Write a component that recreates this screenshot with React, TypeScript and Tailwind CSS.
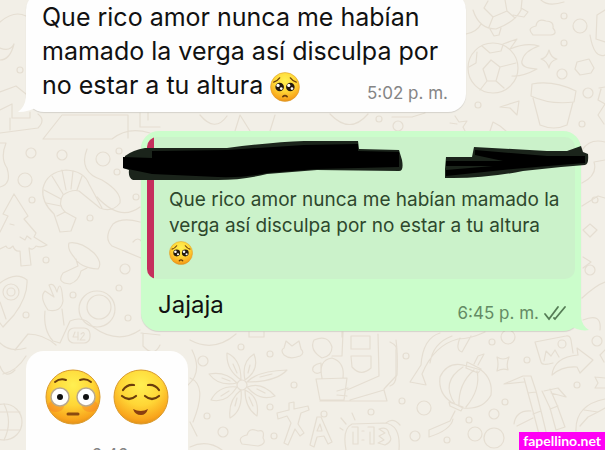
import { ReactNode, useId } from "react";

function Face({ className, label, children }: { className: string; label: string; children: ReactNode }) {
  const id = useId();
  return (
    <svg viewBox="0 0 56 56" role="img" aria-label={label} className={className}>
      <defs>
        <radialGradient id={id} cx="50%" cy="28%" r="75%">
          <stop offset="0" stopColor="#fff052" />
          <stop offset="0.5" stopColor="#ffd636" />
          <stop offset="0.85" stopColor="#f9a51c" />
          <stop offset="1" stopColor="#dd8a18" />
        </radialGradient>
      </defs>
      <circle cx="28" cy="28" r="27" fill={`url(#${id})`} stroke="#d99a2b" strokeWidth="1" />
      {children}
    </svg>
  );
}

function PleadingFace({ className }: { className: string }) {
  return (
    <Face className={className} label="pleading face">
      <g fill="none" stroke="#6b3d0c" strokeWidth="2.5" strokeLinecap="round">
        <path d="M7 19C11 18 15 15 18 11" />
        <path d="M49 19C45 18 41 15 38 11" />
        <path d="M24 46Q28 42 32 46" strokeWidth="3" />
      </g>
      <g fill="#24190f">
        <circle cx="18" cy="28" r="8" />
        <circle cx="38" cy="28" r="8" />
      </g>
      <g fill="#fff">
        <circle cx="15" cy="25" r="3" />
        <circle cx="35" cy="25" r="3" />
        <circle cx="21" cy="31" r="2.5" />
        <circle cx="41" cy="31" r="2.5" />
      </g>
    </Face>
  );
}

function FlushedFace({ className }: { className: string }) {
  return (
    <Face className={className} label="flushed face">
      <ellipse cx="11" cy="37" rx="8" ry="6" fill="#f4672a" opacity="0.3" />
      <ellipse cx="45" cy="37" rx="8" ry="6" fill="#f4672a" opacity="0.3" />
      <g fill="none" stroke="#6b3d0c" strokeWidth="2" strokeLinecap="round">
        <path d="M10 13Q15 9 21 11" />
        <path d="M35 11Q41 9 46 13" />
      </g>
      <g fill="#fff" stroke="#b9a98e" strokeWidth="1.5">
        <circle cx="15" cy="28" r="9" />
        <circle cx="41" cy="28" r="9" />
      </g>
      <circle cx="15" cy="28" r="3" fill="#111" />
      <circle cx="41" cy="28" r="3" fill="#111" />
      <path d="M23 45H33" stroke="#8a4a10" strokeWidth="3" strokeLinecap="round" />
    </Face>
  );
}

function RelievedFace({ className }: { className: string }) {
  return (
    <Face className={className} label="relieved face">
      <g fill="none" stroke="#6b3d0c" strokeWidth="2.2" strokeLinecap="round">
        <path d="M10 21Q14 15 21 16" />
        <path d="M35 16Q42 15 46 21" />
        <path d="M9 27Q16 33 23 27" />
        <path d="M32 27Q39 33 46 27" />
      </g>
      <path d="M20 40Q28 44 35 40Q33 46 28 46Q22 46 20 40Z" fill="#8a3f10" />
    </Face>
  );
}

function Dots() {
  const dots = [
    [31, 153, 5], [62, 155, 5], [103, 159, 7], [25, 180, 7], [32, 200, 3], [90, 218, 3], [46, 260, 3], [125, 269, 5],
    [119, 288, 3], [128, 318, 3], [73, 295, 3], [26, 315, 3], [119, 151, 3], [117, 172, 3], [136, 197, 3], [20, 70, 3],
    [580, 26, 7], [564, 16, 3], [564, 43, 3], [562, 74, 5], [588, 93, 5], [478, 105, 3], [582, 124, 3], [379, 119, 3],
    [398, 126, 5], [203, 361, 5], [241, 347, 3], [270, 354, 3], [294, 385, 3], [270, 407, 3], [207, 416, 3],
    [223, 432, 5], [274, 436, 3], [324, 414, 3], [371, 412, 3], [406, 356, 3], [402, 401, 3], [424, 408, 7],
    [415, 436, 5], [447, 440, 3], [469, 420, 3], [494, 414, 5], [505, 402, 3], [492, 342, 3], [508, 337, 7],
    [527, 360, 3], [577, 385, 3], [597, 341, 5], [475, 434, 7], [494, 438, 10], [595, 200, 3], [590, 270, 5],
  ];
  return (
    <>
      {dots.map(([x, y, r], i) => (
        <circle key={i} cx={x} cy={y} r={r} />
      ))}
    </>
  );
}

function Wallpaper() {
  return (
    <svg
      viewBox="0 0 605 450"
      preserveAspectRatio="xMinYMin slice"
      aria-hidden="true"
      className="absolute inset-0 h-full w-full"
      fill="none"
      stroke="#e5ded2"
      strokeWidth="1.2"
      strokeLinecap="round"
      strokeLinejoin="round"
    >
      <Dots />
      {/* left edge */}
      <path d="M0 22Q14 10 26 16M0 48Q10 52 14 44Q10 60 0 60M0 92L16 86L26 94M0 110L12 104V118H30V112M0 133L38 128Q46 120 38 114M10 118V130" />
      <path d="M0 143H6Q0 158 7 168Q12 184 0 187M43 139L62 115H128V138M43 139H112Q128 126 150 133M140 113V127H160M148 113V120" />
      {/* shrimp */}
      <path d="M87 149Q78 172 102 180Q122 192 120 203Q112 213 100 208L79 191Q72 189 63 195Q57 204 65 212L76 218L71 231L60 232L54 214Q41 202 43 188Q47 172 66 170Q84 171 89 184L102 208" />
      <path d="M52 176L63 194M62 170L66 190M73 171L71 189M82 176L77 190M44 190L61 199M46 203L61 206M57 216L65 212M97 197Q120 222 140 207" />
      {/* tree */}
      <path d="M14 194L3 214L8 216L0 232M14 194L28 216L24 219L36 233L34 237L47 245Q41 248 36 246Q33 251 29 248L31 265L21 266L20 251Q15 252 13 246Q8 251 6 246L0 249M20 237L25 240L27 236L31 239M10 224L14 225" />
      <path d="M140 222Q122 217 113 224Q103 238 112 246L141 258M133 242Q138 236 142 242" />
      {/* mushroom */}
      <path d="M69 243Q80 241 94 253Q103 263 98 269Q80 268 74 257Q67 249 69 243ZM76 259L78 266L63 273Q56 283 70 284Q79 281 81 271L87 268" />
      {/* rocket */}
      <path d="M0 283Q16 271 27 280Q28 296 14 315L3 327L0 323M0 302L6 319" />
      <circle cx="11" cy="292" r="8" />
      <circle cx="11" cy="292" r="4" />
      {/* astronaut */}
      <path d="M48 310Q39 297 45 291L54 297L49 285Q54 282 57 292Q60 280 62 292L63 301Q61 313 48 310ZM45 311Q43 330 53 341L60 343L70 321Q84 315 93 327M62 309L64 325M15 350L28 334Q43 334 56 345M93 327Q118 345 140 330" />
      <circle cx="97" cy="309" r="18" />
      <circle cx="99" cy="307" r="12" />
      <rect x="68" y="328" width="22" height="15" rx="6" />
      <path d="M75 332L73 337H78M78 332V340M81 334Q85 331 84 335L80 340H85" />
      {/* turtle, ball, sparkle */}
      <path d="M473 10Q479 29 496 29Q515 22 521 10L522 0M466 34Q477 32 481 24M521 8L528 12L524 17L513 15M490 29L494 36L499 35L501 28M484 8L488 1M484 8L493 17L507 11L505 0M493 17L489 27M507 11L515 18" />
      <circle cx="493" cy="68" r="25" />
      <path d="M491 60L500 67L496 81H487L483 69ZM482 46L490 53L501 51L503 45M469 67L476 63L477 52M480 90L487 81M496 81L504 88M500 67L516 63M503 44L517 39L510 49Q526 42 539 46Q524 51 522 61Q520 68 537 69Q522 77 512 76" />
      <path d="M549 50Q551 58 557 59Q550 61 549 68Q547 61 541 59Q547 58 549 50ZM533 35Q526 28 536 26Q537 18 546 21Q554 21 553 28Q558 34 551 35ZM541 0Q548 7 564 2M577 62L589 59L594 68L591 73L580 75L575 69ZM605 10L597 15L596 39M590 35Q594 59 605 55M596 39L605 42" />
      <path d="M532 84Q553 80 576 91L574 102Q550 105 531 96ZM533 98L540 125Q554 131 567 125L573 102M500 107L519 101L517 115L510 108ZM599 88L605 87M601 89L598 100L605 104L598 115L604 124" />
      <path d="M455 116L459 122L467 121L463 127L465 131M450 123L457 124M392 117H412L425 113M330 114Q350 135 368 114M235 131L240 115L250 131M270 131L275 115M200 115Q215 133 227 116M490 131L493 122L500 126L506 131" />
      <path d="M582 150Q590 138 605 142M582 183Q598 175 594 162L605 160M582 206L598 196L605 198M583 230L590 224L597 230L590 237ZM583 268L591 262L583 257M582 298Q596 285 605 282M583 320Q602 312 600 330" />
      {/* flower */}
      <circle cx="242" cy="385" r="5" />
      <path d="M241 380Q226 370 227 353Q241 359 241 380ZM245 380Q241 362 254 354Q260 370 245 380ZM247 382Q257 371 287 370Q276 382 247 382ZM247 387Q262 381 275 396Q260 402 247 387ZM245 390Q260 397 257 416Q245 408 245 390ZM241 390Q228 400 230 418Q243 411 241 390ZM237 387Q219 385 211 400Q226 404 237 387ZM237 383Q226 371 209 374Q219 387 237 383ZM233 364L237 373M250 365L248 373M260 377L272 374M257 389L265 393M249 397L253 406M237 398L235 406M222 378L230 381M221 396L229 391" />
      <path d="M190 378Q208 385 193 422M190 422L197 436M190 340Q214 353 236 334M249 332V337H264V332M284 348L286 341L292 346L299 341L301 349Q305 353 300 356Q290 360 284 355Q280 350 284 348ZM242 444Q237 437 247 435Q249 427 258 431Q265 429 263 438Q267 444 258 446ZM190 447Q207 439 222 450" />
      {/* translate */}
      <path d="M277 413L289 410V403L294 402L294 409L308 406L309 410L301 413L298 424L304 433L300 436L295 429L288 445L284 443L291 423L287 416L278 419ZM310 445L317 417H321L332 442L328 444L324 436L317 437L314 447ZM317 431H322L320 424Z" />
      {/* cactus */}
      <path d="M316 379L347 378L344 400H320ZM320 401H387L384 390L350 400M347 390L379 376L378 334M322 378Q318 360 332 358Q345 362 343 378M322 358Q309 350 314 340Q328 334 332 347Q332 356 322 358ZM332 356H342L343 332M342 337V332M384 389L397 375Q398 355 396 340M351 336H370V349H351ZM351 356H371V368Q361 377 352 367ZM321 363Q311 365 313 371Q316 375 321 372ZM337 391L348 388M337 395L347 396" />
      {/* alarm clock */}
      <path d="M346 450Q342 429 352 424L384 423Q401 424 399 450M386 423Q393 417 400 425M341 418L346 424M352 413L355 420M340 428L343 430M352 427H358V444H353V432M362 431H364M362 440H364M368 427H374V444H370V432M379 429Q388 426 389 434Q394 441 385 445L378 443L384 440L379 436L385 433Z" />
      {/* fish and lantern */}
      <path d="M410 382L421 365Q423 338 440 333M410 382L426 385L422 374Q434 345 458 339Q470 339 485 332M430 363Q433 343 452 336M460 338Q455 350 462 352L471 336M390 342Q398 346 396 350V376Q396 384 390 386" />
      <path d="M451 402Q438 393 440 377Q448 360 467 366L481 370Q493 379 491 395Q483 410 463 408ZM455 404Q440 382 463 367M459 406Q458 384 474 370M466 407Q481 389 477 371M467 362L481 369L478 373L466 368ZM474 364L478 356L484 354L478 365M449 402L463 407L461 411L450 406ZM455 411L450 421L429 430V437Q451 430 453 419" />
      {/* bamboo, picture, arrow */}
      <path d="M497 357Q503 361 509 357Q506 364 508 370Q503 368 497 371Q499 364 497 357ZM504 384L523 376H531L536 391L542 415L548 440M524 378L528 393L534 415L540 438M528 393L536 392M533 414L541 411M504 384L524 382M542 391L550 408L556 430L565 427L557 405L550 389M550 409L558 406M544 391L558 388L566 397L551 393M514 424Q516 410 531 411M517 426L533 418M549 436L555 441" />
      <path d="M535 342L566 336Q570 335 571 340L573 353M535 342L541 362Q542 366 553 363M544 361L546 351L551 356L555 350L559 357M552 375Q554 357 578 355L577 348L593 360L580 373L577 367Q562 366 552 375Z" />
      <circle cx="562" cy="344" r="4" />
      <path d="M595 377L605 378M595 377L598 383L595 388H605M576 431Q575 405 605 399M584 410L598 412L605 408M580 426L588 417L598 412M605 350L600 355L604 362" />
      <circle cx="4" cy="422" r="18" />
      <path d="M0 343Q10 353 26 348M3 374Q17 371 26 356M0 366Q5 380 15 370M-4 412H20M-4 430H20M4 404Q13 422 4 440M143 333V346Q154 358 160 345M141 333L160 335M188 385Q203 372 192 350" />
    </svg>
  );
}

function IncomingTail() {
  return (
    <svg viewBox="0 0 20 20" aria-hidden="true" className="absolute bottom-0 -left-2 h-5 w-5 fill-[#fefefe]">
      <path d="M8 0V5Q7 15 0 20Q12 20 20 14V0Z" />
    </svg>
  );
}

function OutgoingTail() {
  return (
    <svg viewBox="0 0 20 20" aria-hidden="true" className="absolute -right-2 bottom-0 h-5 w-5 fill-[#cbfdcb]">
      <path d="M12 0V6Q13 15 20 19Q10 21 0 14V0Z" />
    </svg>
  );
}

function Redaction() {
  return (
    <svg viewBox="0 0 470 40" aria-hidden="true" className="absolute top-1 -left-6 h-10 w-[470px] max-w-none">
      <path d="M2 15Q10 9 22 7L104 7Q150 1 181 0L235 0L236 8L276 9L279 19Q281 30 276 30L194 29L144 33Q120 39 95 39L10 39Q5 37 6 29L0 27Z" fill="#1b241b" />
      <path d="M29 10L104 9L181 4L235 3V10L276 11V26L194 28L144 32Q120 37 95 36L29 33L0 27V16L29 17Z" fill="#000" />
      <path d="M323 16L349 16L351 6L424 10L444 10L458 5L460 11L465 13Q466 23 462 24L438 26L400 30Q360 38 322 37L322 28Z" fill="#1b241b" />
      <path d="M323 20L380 20L352 14V9L424 15L462 15V22L437 24L390 28L323 35V29L370 25L323 25Z" fill="#000" />
    </svg>
  );
}

function DoubleCheck() {
  return (
    <svg viewBox="0 0 24 16" role="img" aria-label="Entregado" className="h-4 w-6" fill="none" stroke="#557c55" strokeWidth="1.8" strokeLinecap="round">
      <path d="M2 9L6 14L15 2" />
      <path d="M11 13L12 14L22 2" />
    </svg>
  );
}

export default function App() {
  return (
    <main className="relative h-screen min-h-[450px] overflow-hidden bg-[#f2efe7] font-['Inter',sans-serif] text-[#111]">
      <Wallpaper />
      <div className="relative flex flex-col pr-6 pl-[26px]">
        <article className="relative -mt-2 w-full max-w-[440px] rounded-[18px] bg-[#fefefe] pt-2 pr-[18px] pb-2.5 pl-4 shadow-[0_1px_1px_rgba(0,0,0,0.12)]">
          <IncomingTail />
          <p className="text-[25px] leading-[34px]">
            Que rico amor nunca me habían mamado la verga así disculpa por no estar a tu altura{" "}
            <PleadingFace className="-my-1 inline-block h-[30px] w-[30px] align-middle" />
            <time className="float-right mt-4 text-[17px] leading-[18px] text-[#858585]">5:02 p. m.</time>
          </p>
        </article>

        <article className="relative mt-[19px] w-full max-w-[440px] self-end rounded-[18px] bg-[#cbfdcb] p-1.5 shadow-[0_1px_1px_rgba(0,0,0,0.12)]">
          <OutgoingTail />
          <blockquote className="relative rounded-[10px] bg-[#cbf2ca]">
            <div className="overflow-hidden rounded-[10px]">
              <p className="border-l-[7px] border-[#c52f5d] pt-[50px] pr-2 pb-3.5 pl-[15px] text-[19px] leading-[26px] text-[#2e482d]">
                Que rico amor nunca me habían mamado la verga así disculpa por no estar a tu altura{" "}
                <PleadingFace className="-my-1 inline-block h-6 w-6 align-middle" />
              </p>
            </div>
            <Redaction />
          </blockquote>
          <div className="flex items-end justify-between pt-2.5 pr-2 pl-[11px]">
            <p className="pb-1 text-2xl leading-8">Jajaja</p>
            <div className="flex items-center gap-1">
              <time className="text-[17px] leading-6 text-[#648b64]">6:45 p. m.</time>
              <DoubleCheck />
            </div>
          </div>
        </article>

        <article className="mt-5 flex w-[162px] flex-col rounded-[18px] bg-[#fefefe] px-[15px] pt-[18px] pb-2.5">
          <p className="flex justify-center gap-3">
            <FlushedFace className="h-14 w-14" />
            <RelievedFace className="h-14 w-14" />
          </p>
          <time className="mt-5 self-end text-[17px] leading-5 text-[#858585]">6:46 p. m.</time>
        </article>
      </div>
      <a href="#" className="absolute right-0 bottom-0 bg-[#ff00f5] px-1 font-['Lato',sans-serif] text-sm leading-[18px] font-bold text-white">
        fapellino.net
      </a>
    </main>
  );
}
